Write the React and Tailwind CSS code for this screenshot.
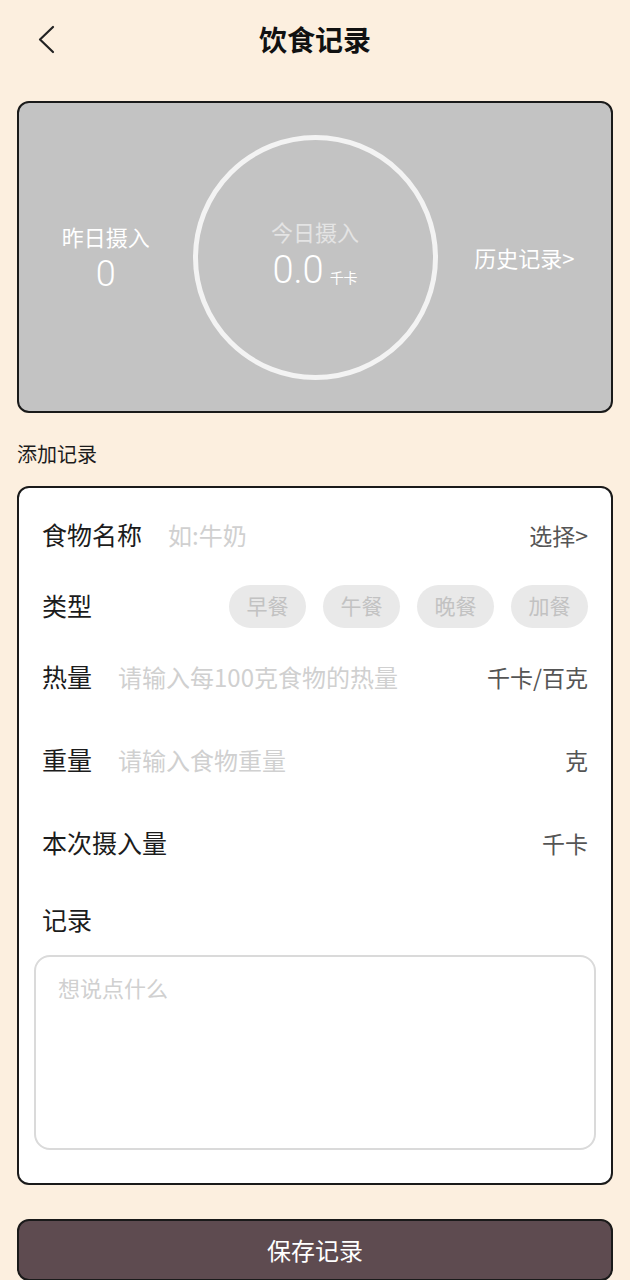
import { useState } from 'react';

const mealTypes = ['早餐', '午餐', '晚餐', '加餐'];

function FieldRow({ label, placeholder, unit, className }) {
  return (
    <div className={`flex items-center px-[8px] ${className}`}>
      <span className="shrink-0 text-[25px] text-[#1c1c1c]">{label}</span>
      {placeholder && (
        <input
          className="ml-[26px] min-w-0 flex-1 bg-transparent text-[24px] text-[#222] outline-none placeholder:text-[#d0d0d0]"
          placeholder={placeholder}
        />
      )}
      {!placeholder && <div className="flex-1" />}
      <span className="shrink-0 text-[23px] text-[#555]">{unit}</span>
    </div>
  );
}

export default function App() {
  const [meal, setMeal] = useState(null);

  return (
    <div className="min-h-[1280px] bg-[#fcefdf] font-['Noto_Sans_CJK_SC','Noto_Sans',sans-serif]">
      {/* header */}
      <div className="relative flex h-[78px] items-center justify-center">
        <button className="absolute left-[34px] top-[22px] p-[2px]">
          <svg width="20" height="30" viewBox="0 0 20 30" fill="none">
            <path d="M17 3L4 15.5L17 28" stroke="#222" strokeWidth="2.2" strokeLinecap="round" strokeLinejoin="round" />
          </svg>
        </button>
        <h1 className="text-[28px] font-bold text-[#111]">饮食记录</h1>
      </div>

      <div className="px-[17px]">
        {/* summary card */}
        <div className="mt-[23px] flex h-[312px] items-center rounded-[12px] border-2 border-[#1a1a1a] bg-[#c3c3c3]">
          <div className="flex flex-1 flex-col items-center text-white">
            <span className="text-[22px] leading-[30px]">昨日摄入</span>
            <span className="mt-[3px] font-['Roboto',sans-serif] text-[36px] font-light leading-[40px]">0</span>
          </div>
          <div className="flex h-[245px] w-[245px] flex-col items-center justify-center rounded-full border-[5px] border-[#f3f3f3]">
            <span className="mt-[-6px] text-[22px] leading-[30px] text-[#e4e4e4]">今日摄入</span>
            <div className="mt-[2px] flex items-baseline text-white">
              <span className="font-['Roboto',sans-serif] text-[38px] font-light leading-[44px]">0.0</span>
              <span className="ml-[6px] text-[14px]">千卡</span>
            </div>
          </div>
          <div className="flex flex-1 justify-center">
            <span className="text-[22px] text-white">历史记录&gt;</span>
          </div>
        </div>

        <p className="mt-[26px] text-[20px] leading-[30px] text-[#1c1c1c]">添加记录</p>

        {/* form card */}
        <div className="mt-[17px] rounded-[12px] border-2 border-[#1a1a1a] bg-white px-[15px] pb-[33px] pt-[12px]">
          <div className="flex h-[70px] items-center px-[8px]">
            <span className="shrink-0 text-[25px] text-[#1c1c1c]">食物名称</span>
            <input
              className="ml-[26px] min-w-0 flex-1 bg-transparent text-[24px] outline-none placeholder:text-[#d0d0d0]"
              placeholder="如:牛奶"
            />
            <span className="shrink-0 text-[23px] text-[#555]">选择&gt;</span>
          </div>

          <div className="flex h-[72px] items-center px-[8px]">
            <span className="flex-1 text-[25px] text-[#1c1c1c]">类型</span>
            <div className="flex gap-[17px]">
              {mealTypes.map((m) => (
                <button
                  key={m}
                  onClick={() => setMeal(m)}
                  className={`flex h-[43px] w-[77px] items-center justify-center rounded-full text-[21px] ${
                    meal === m ? 'bg-[#5e4b50] text-white' : 'bg-[#e9e9e9] text-[#c2c2c2]'
                  }`}
                >
                  {m}
                </button>
              ))}
            </div>
          </div>

          <FieldRow className="h-[70px]" label="热量" placeholder="请输入每100克食物的热量" unit="千卡/百克" />
          <FieldRow className="h-[96px]" label="重量" placeholder="请输入食物重量" unit="克" />
          <FieldRow className="h-[70px]" label="本次摄入量" unit="千卡" />

          <div className="px-[8px] pb-[20px] pt-[26px]">
            <span className="text-[25px] leading-[30px] text-[#1c1c1c]">记录</span>
          </div>

          <textarea
            className="block h-[195px] w-full resize-none rounded-[16px] border-2 border-[#dadada] px-[22px] py-[14px] text-[22px] outline-none placeholder:text-[#d0d0d0]"
            placeholder="想说点什么"
          />
        </div>

        <button className="mt-[34px] flex h-[62px] w-full items-center justify-center rounded-[12px] border-2 border-[#1a1a1a] bg-[#5e4b50] text-[24px] text-white">
          保存记录
        </button>
      </div>
    </div>
  );
}
